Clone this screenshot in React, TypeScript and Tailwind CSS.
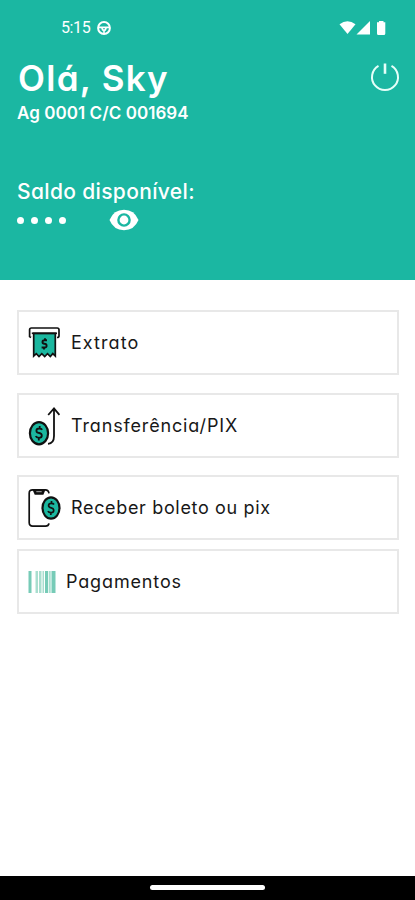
import type { ReactNode } from "react"

interface MenuItemProps {
  icon: ReactNode
  label: string
  className?: string
  labelClassName?: string
}

function ReceiptIcon() {
  return (
    <svg width="34" height="34" viewBox="0 0 34 34" fill="none" stroke="#111" strokeWidth="1.7">
      <path d="M4 11.5 2.6 10.5V3.8Q2.6 2 4.4 2H30.2Q32 2 32 3.8V10Q32 11.5 30 11.5" fill="#fff" />
      <path d="M6.7 7.3H28.3V30L25.8 27.6 23.3 30.5 20.5 27.6 17.7 30.5 14.8 27.6 12 30.5 9.3 27.6 6.7 30Z" fill="#1bb79f" />
      <path d="M4.8 7.3H30" />
      <path d="M20 14.3H17.2Q15.5 14.3 15.5 16T17.3 17.7Q19.6 17.7 19.6 19.7T17.6 21.5H14.6M18 12.3V14.3M17 21.5V23.5" strokeWidth="1.9" />
    </svg>
  )
}

function TransferIcon() {
  return (
    <svg width="34" height="42" viewBox="0 0 34 42" fill="none" stroke="#111" strokeWidth="1.8">
      <ellipse cx="12" cy="28.2" rx="9.1" ry="11.1" fill="#1bb79f" strokeWidth="2.2" />
      <path d="M15.2 24.7Q14.5 23.5 12.3 23.5 9.4 23.5 9.4 25.7 9.4 27.6 12.2 28 14.8 28.5 14.8 30.5 14.8 32.8 12 32.8 9.5 32.8 8.7 31.2M12.7 21V23.5M11.8 32.8V35.5" />
      <path d="M21 38.8Q27 38.5 27 31V4M21.2 10 27 3.4 32.4 9.8" />
    </svg>
  )
}

function PhoneIcon() {
  return (
    <svg width="34" height="42" viewBox="0 0 34 42" fill="none" stroke="#111" strokeWidth="1.7">
      <path d="M22 6.4Q21.5 2.8 18.3 2.8H5.7Q2.2 2.8 2.2 6.2V35.6Q2.2 39.2 5.7 39.2H18.5Q21.5 39.2 22 36.4" />
      <path d="M6.5 2.8H17.5L15.8 7H8.3Z" fill="#111" />
      <path d="M9.3 4.7H14.7" stroke="#aaa" strokeWidth="1" />
      <ellipse cx="24" cy="21" rx="8.5" ry="10.7" fill="#1bb79f" strokeWidth="2.2" />
      <path d="M27 17.5Q26.3 16.4 24.3 16.4 21.6 16.4 21.6 18.5 21.6 20.4 24.2 20.9 26.7 21.4 26.7 23.4 26.7 25.6 24.1 25.6 21.7 25.6 20.9 24.1M24.5 14V16.4M23.8 25.6V28" />
    </svg>
  )
}

function BarcodeIcon() {
  return (
    <svg width="28" height="22" viewBox="0 0 28 22">
      <path fill="#77cbb7" d="M.5 0H3.5V22H.5ZM17 0H20V22H17ZM23.5 0H27.5V22H23.5Z" />
      <path fill="#a9decf" d="M7.5 0H10V22H7.5ZM11 0H13.5V22H11ZM14.5 0H16V22H14.5ZM20.7 0H22.7V22H20.7Z" />
    </svg>
  )
}

function MenuItem({ icon, label, className = "", labelClassName = "" }: MenuItemProps) {
  return (
    <button className={`flex h-[65px] w-full items-center border-2 border-[#e8e8e8] bg-white text-left text-[#181818] ${className}`}>
      {icon}
      <span className={`whitespace-nowrap text-[18px] leading-6 ${labelClassName}`}>{label}</span>
    </button>
  )
}

function StatusBar() {
  return (
    <div className="flex h-[56px] items-center pl-[61px] pr-[28px]">
      <span className="font-[Roboto] text-[16px] leading-4 tracking-[-0.4px]">5:15</span>
      <svg className="ml-[7px]" width="14" height="14" viewBox="0 0 14 14" fill="none" stroke="white" strokeWidth="2">
        <circle cx="7" cy="7" r="5.9" />
        <path d="M1.5 6.4H12.5M4.8 6.6 5.7 9H8.3L9.2 6.6M7 9V12" strokeWidth="1.6" />
      </svg>
      <div className="ml-auto flex items-center">
        <svg width="48" height="16" viewBox="0 0 48 16" fill="white">
          <path d="M.5 4.3Q8.5-1.8 16.5 4.3L8.5 14Z" />
          <path d="M31 1V14.5H17.5Z" />
          <path d="M40 1H44.5V2.3H46.3V13.5Q46.3 15 44.8 15H39.4Q38 15 38 13.5V2.3H40Z" />
        </svg>
      </div>
    </div>
  )
}

export default function App() {
  return (
    <div className="flex h-[900px] w-[415px] flex-col overflow-hidden bg-white font-['Inter',sans-serif] [font-feature-settings:'cv11']">
      <header className="h-[280px] bg-[#1bb7a2] text-white">
        <StatusBar />
        <div className="flex justify-between pl-[18px] pr-[15px]">
          <h1 className="h-[46px] whitespace-nowrap text-[35px] font-semibold leading-[44px] tracking-[1.3px]">Olá, Sky</h1>
          <svg className="mt-[6px]" width="30" height="30" viewBox="0 0 30 30" fill="none" stroke="#e5fff9" strokeWidth="2">
            <path d="M8.5 3.8A13 13 0 1 0 21.5 3.8" />
            <path d="M15 1.5V11.8" strokeWidth="2.6" />
          </svg>
        </div>
        <p className="ml-[17px] whitespace-nowrap text-[17px] font-semibold leading-[22px] tracking-[0.06px]">Ag 0001 C/C 001694</p>
        <p className="ml-[17px] mt-[55px] whitespace-nowrap text-[21px] font-medium leading-[26px] tracking-[0.35px]">Saldo disponível:</p>
        <div className="ml-[17px] flex h-[30px] items-center">
          <div className="flex gap-[7px]">
            {[0, 1, 2, 3].map((dot) => (
              <span key={dot} className="size-[7px] rounded-full bg-white" />
            ))}
          </div>
          <svg className="ml-[43px]" width="30" height="22" viewBox="0 0 30 22">
            <path fill="white" d="M.5 11Q4.7.8 15 .8T29.5 11Q25.3 21.2 15 21.2T.5 11Z" />
            <circle cx="15" cy="11" r="5.6" fill="white" stroke="#1bb7a2" strokeWidth="2.4" />
          </svg>
        </div>
      </header>

      <main className="flex flex-1 flex-col pl-[17px] pr-[16px] pt-[30px]">
        <MenuItem icon={<ReceiptIcon />} label="Extrato" className="mb-[18px] pl-[8px]" labelClassName="ml-[10px] tracking-[1.05px]" />
        <MenuItem icon={<TransferIcon />} label="Transferência/PIX" className="mb-[17px] pl-[8px]" labelClassName="ml-[10px] tracking-[0.85px]" />
        <MenuItem icon={<PhoneIcon />} label="Receber boleto ou pix" className="mb-[9px] pl-[8px]" labelClassName="ml-[10px] tracking-[0.66px]" />
        <MenuItem icon={<BarcodeIcon />} label="Pagamentos" className="pl-[9px]" labelClassName="ml-[10px] tracking-[0.85px]" />
      </main>

      <footer className="flex h-[24px] justify-center bg-black pt-[9px]">
        <div className="h-[5px] w-[115px] rounded-full bg-white" />
      </footer>
    </div>
  )
}
